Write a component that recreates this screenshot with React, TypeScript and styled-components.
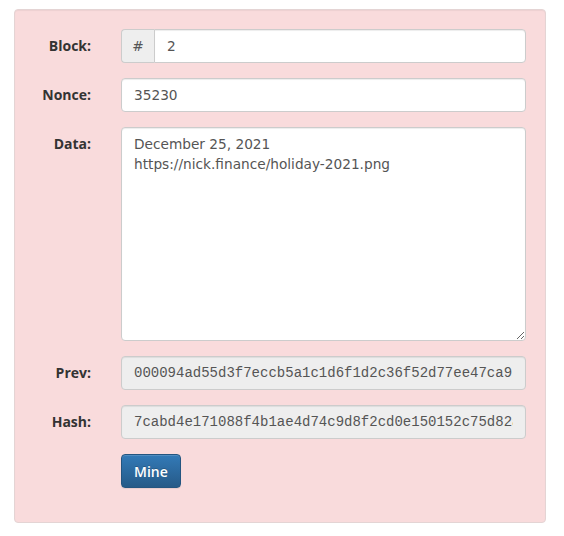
import React from "react";
import styled, { createGlobalStyle } from "styled-components";

const Global = createGlobalStyle`
  html, body { margin: 0; padding: 0; background: #fff; }
  body { font-family: "Open Sans", "Liberation Sans", sans-serif; font-size: 14px; line-height: 20px; color: #333; }
  * { box-sizing: border-box; }
`;

const textFont = '"DejaVu Sans", "Open Sans", sans-serif';

const Page = styled.div`
  padding: 9px 18px 14px 14px;
`;

const Well = styled.form`
  background: #f9dbdc;
  border: 1px solid #e4d4d4;
  border-radius: 4px;
  padding: 19px 19px 34px 19px;
  display: flex;
  flex-direction: column;
  gap: 15px;
  box-shadow: inset 0 1px 1px rgba(0,0,0,0.05);
`;

const Row = styled.div`
  display: grid;
  grid-template-columns: 57px 1fr;
  column-gap: 30px;
  align-items: start;
`;

const Label = styled.label`
  font-weight: 700;
  text-align: right;
  padding-top: 7px;
  color: #333;
  white-space: nowrap;
`;

const Group = styled.div`
  display: flex;
`;

const Addon = styled.span`
  width: 33px;
  flex: none;
  height: 34px;
  display: flex;
  align-items: center;
  justify-content: center;
  background: #eee;
  border: 1px solid #ccc;
  border-right: 0;
  border-radius: 4px 0 0 4px;
  color: #555;
  font-family: ${textFont};
  font-size: 13.7px;
`;

const Input = styled.input<{ $mono?: boolean; $joined?: boolean }>`
  width: 100%;
  height: 34px;
  padding: 6px 12px;
  font-family: ${(p) => (p.$mono ? '"Liberation Mono", "Courier New", monospace' : textFont)};
  font-size: ${(p) => (p.$mono ? "14px" : "13.7px")};
  color: #555;
  background: ${(p) => (p.readOnly ? "#eee" : "#fff")};
  border: 1px solid #ccc;
  border-radius: ${(p) => (p.$joined ? "0 4px 4px 0" : "4px")};
  box-shadow: inset 0 1px 1px rgba(0,0,0,0.075);
  outline: none;
  min-width: 0;
`;

const TextArea = styled.textarea`
  width: 100%;
  height: 214px;
  padding: 6px 12px;
  font-family: ${textFont};
  font-size: 13.7px;
  line-height: 20px;
  color: #555;
  background: #fff;
  border: 1px solid #ccc;
  border-radius: 4px;
  box-shadow: inset 0 1px 1px rgba(0,0,0,0.075);
  outline: none;
  resize: vertical;
  display: block;
`;

const Button = styled.button`
  justify-self: start;
  height: 34px;
  padding: 6px 12px;
  font-family: "Open Sans", "Liberation Sans", sans-serif;
  font-size: 14px;
  font-weight: 600;
  color: #fff;
  background-image: linear-gradient(to bottom, #337ab7 0, #265a88 100%);
  border: 1px solid #245580;
  border-radius: 4px;
  text-shadow: 0 -1px 0 rgba(0,0,0,0.2);
  box-shadow: inset 0 1px 0 rgba(255,255,255,0.15), 0 1px 1px rgba(0,0,0,0.075);
  cursor: pointer;
`;

export default function App() {
  return (
    <Page>
      <Global />
      <Well onSubmit={(e) => e.preventDefault()}>
        <Row>
          <Label>Block:</Label>
          <Group>
            <Addon>#</Addon>
            <Input $joined defaultValue="2" />
          </Group>
        </Row>
        <Row>
          <Label>Nonce:</Label>
          <Input defaultValue="35230" />
        </Row>
        <Row>
          <Label>Data:</Label>
          <TextArea defaultValue={"December 25, 2021\nhttps://nick.finance/holiday-2021.png"} />
        </Row>
        <Row>
          <Label>Prev:</Label>
          <Input $mono readOnly value="000094ad55d3f7eccb5a1c1d6f1d2c36f52d77ee47ca9" />
        </Row>
        <Row>
          <Label>Hash:</Label>
          <Input $mono readOnly value="7cabd4e171088f4b1ae4d74c9d8f2cd0e150152c75d82a1f" />
        </Row>
        <Row>
          <span />
          <Button type="submit">Mine</Button>
        </Row>
      </Well>
    </Page>
  );
}
